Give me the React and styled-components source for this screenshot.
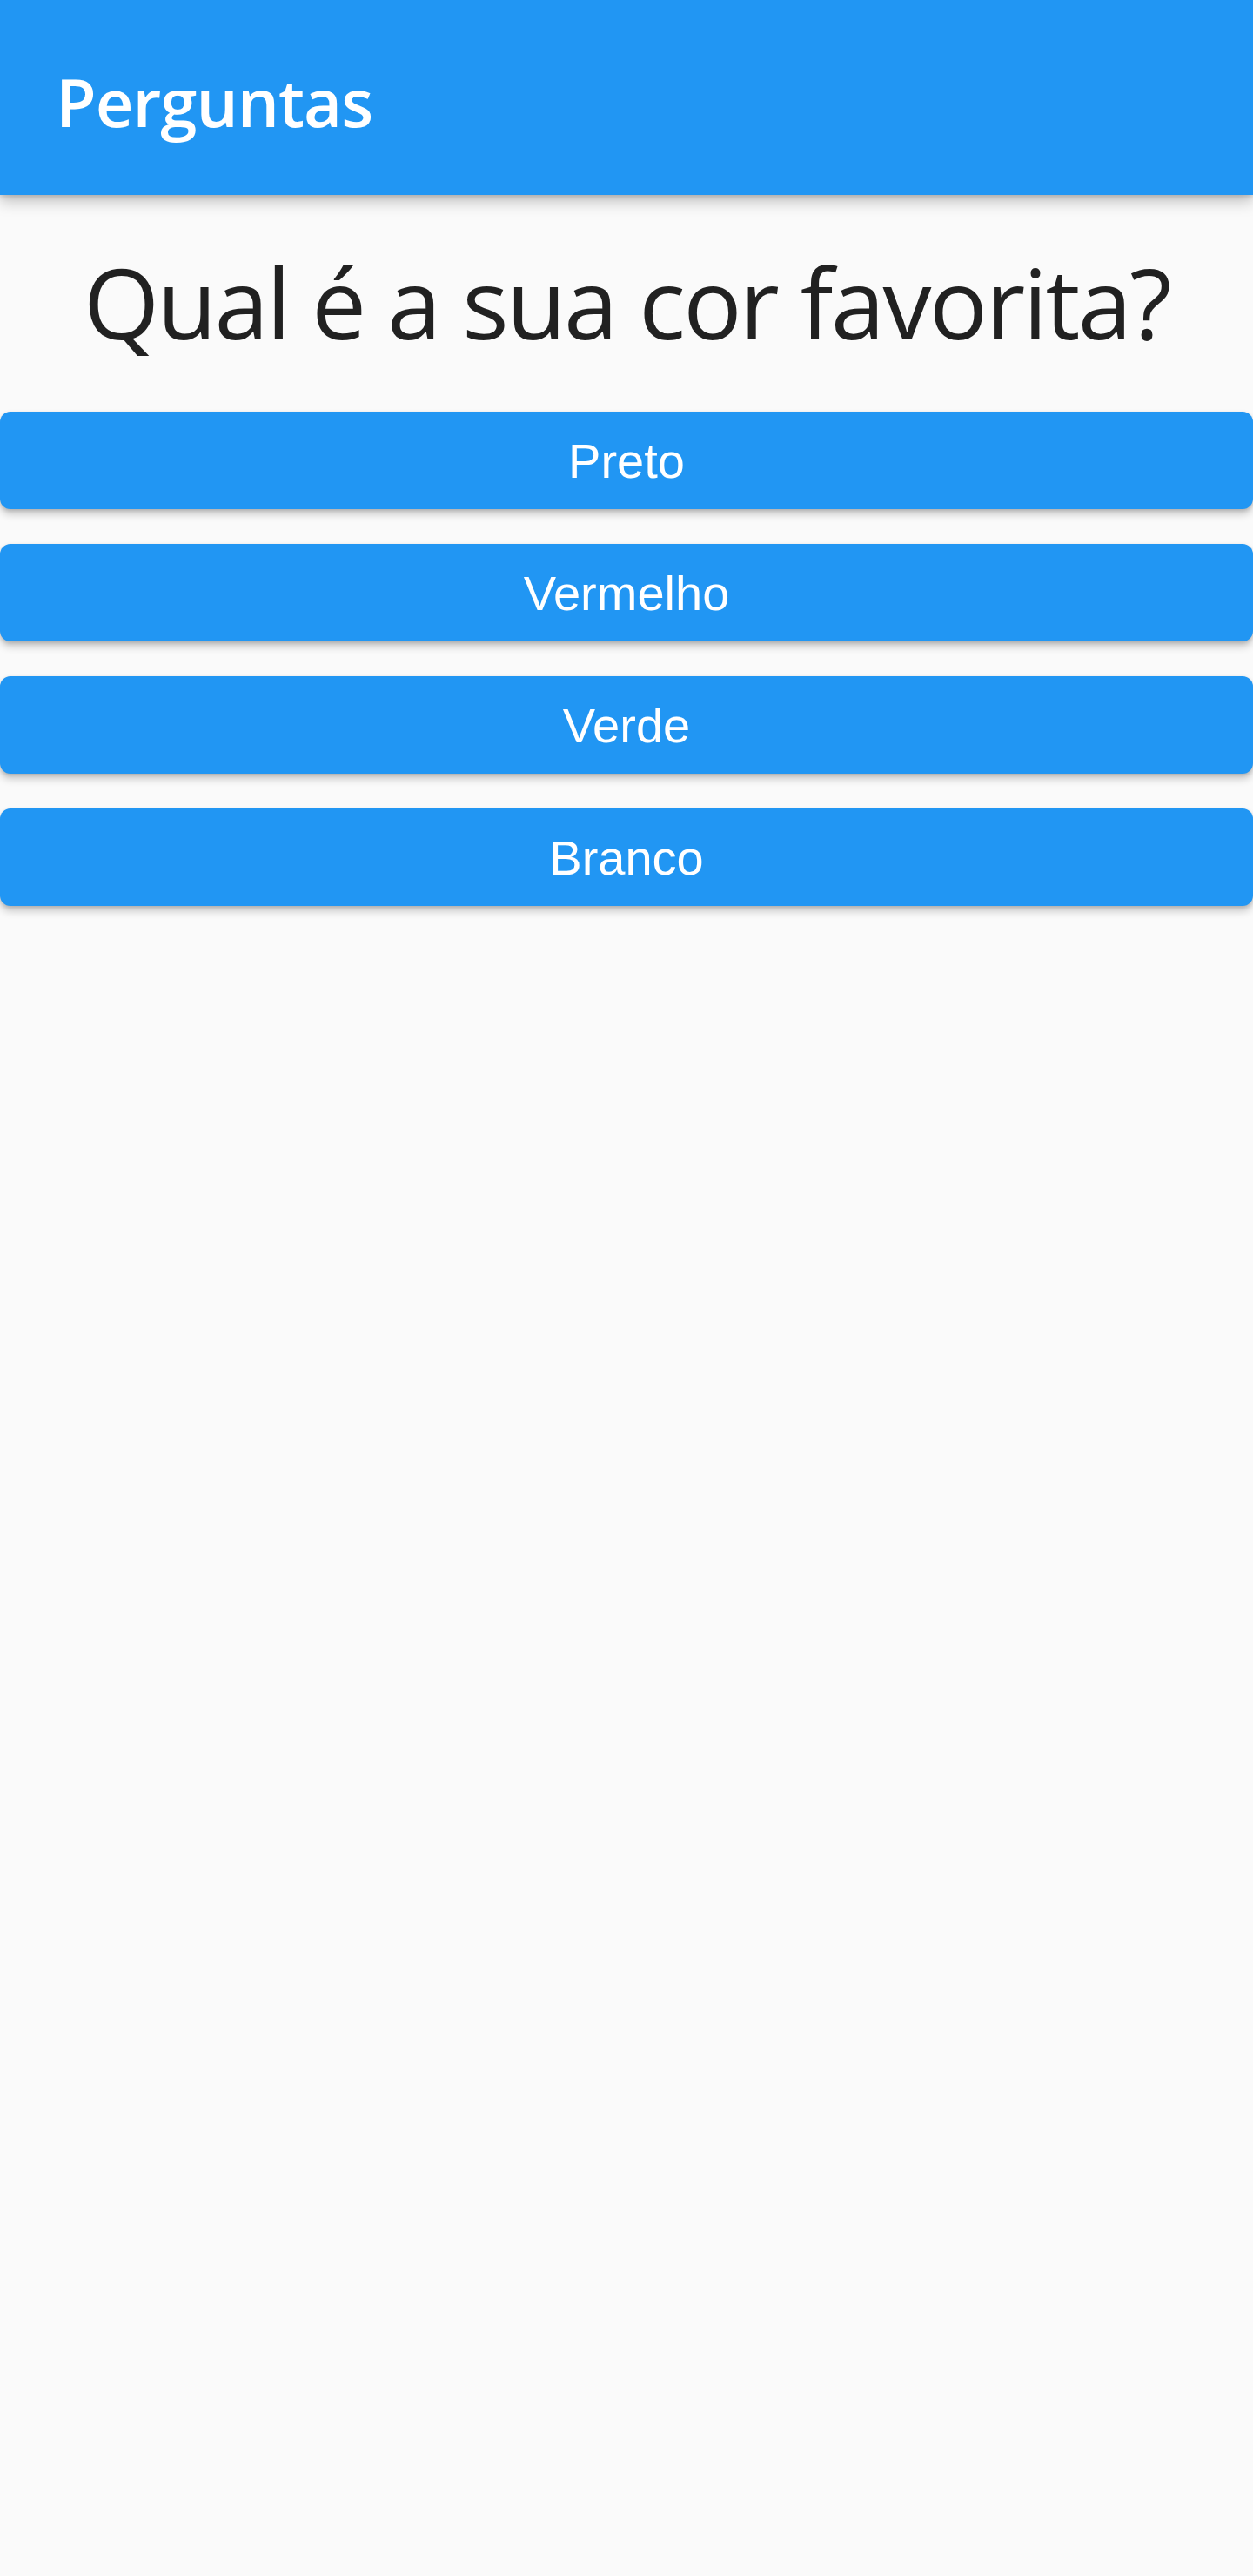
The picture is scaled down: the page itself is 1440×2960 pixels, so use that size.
import React from "react";
import styled, { createGlobalStyle } from "styled-components";

const GlobalStyle = createGlobalStyle`
  html, body {
    margin: 0;
    padding: 0;
    background: #fafafa;
  }
  body {
    font-family: "Open Sans", "Noto Sans", sans-serif;
  }
`;

const Page = styled("div")`
  min-height: 2960px;
  background: #fafafa;
`;

const AppBar = styled("header")`
  height: 224px;
  box-sizing: border-box;
  background: #2196f3;
  display: flex;
  align-items: center;
  padding: 8px 64px 0;
  box-shadow: 0 8px 16px rgba(0, 0, 0, 0.22), 0 2px 6px rgba(0, 0, 0, 0.16);
  position: relative;
  z-index: 1;
`;

const Title = styled("h1")`
  margin: 0;
  font-family: "Open Sans", "Noto Sans", sans-serif;
  font-weight: 600;
  font-size: 76px;
  letter-spacing: -1px;
  color: #ffffff;
`;

const Question = styled("div")`
  margin: 48px 40px 32px;
  text-align: center;
  font-family: "Open Sans", "Noto Sans", sans-serif;
  font-size: 112px;
  line-height: 149px;
  letter-spacing: -2.6px;
  color: rgba(0, 0, 0, 0.87);
`;

const Answers = styled("div")`
  display: flex;
  flex-direction: column;
`;

const Answer = styled("button")`
  margin: 20px 0;
  height: 112px;
  width: 100%;
  border: none;
  border-radius: 12px;
  background: #2196f3;
  color: #ffffff;
  font-family: "Liberation Sans", Arial, sans-serif;
  font-size: 56px;
  cursor: pointer;
  box-shadow: 0 6px 10px rgba(0, 0, 0, 0.2), 0 2px 4px rgba(0, 0, 0, 0.14);
`;

const answers = ["Preto", "Vermelho", "Verde", "Branco"];

const App = () => (
  <>
    <GlobalStyle />
    <Page>
      <AppBar>
        <Title>Perguntas</Title>
      </AppBar>
      <Question>Qual é a sua cor favorita?</Question>
      <Answers>
        {answers.map(answer => (
          <Answer key={answer}>{answer}</Answer>
        ))}
      </Answers>
    </Page>
  </>
);

export default App;
